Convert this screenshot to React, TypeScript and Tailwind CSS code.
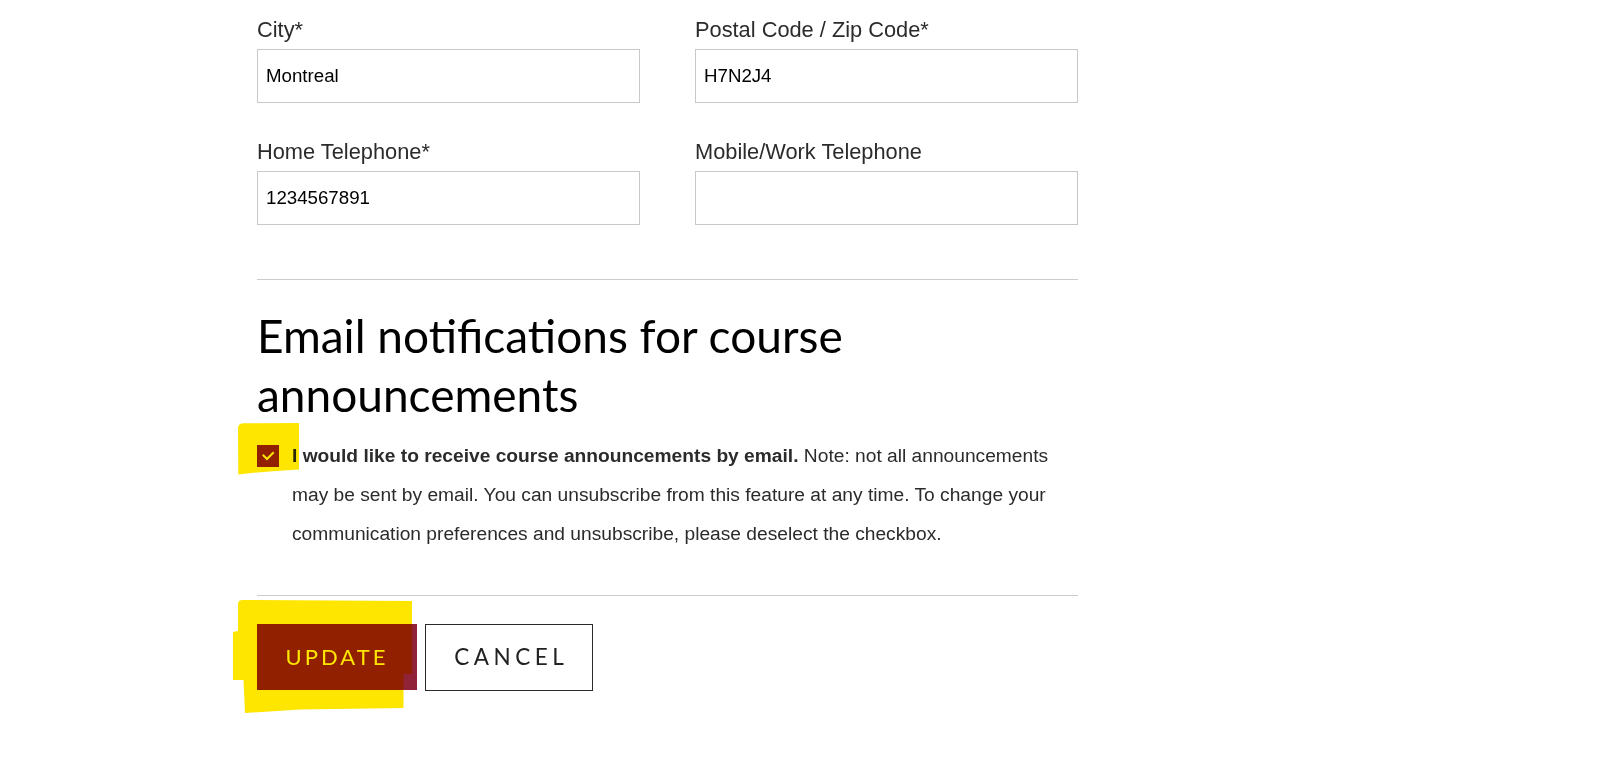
import React from "react";

function Field({ label, value }: { label: string; value: string }) {
  return (
    <div className="flex flex-col">
      <label className="mb-[6px] text-[21.8px] leading-[26px] text-[#2b2b2b] [font-family:'Liberation_Sans',Arial,sans-serif]">
        {label}
      </label>
      <input
        readOnly
        value={value}
        className="h-[54px] w-full border border-[#c8c8c8] bg-white px-[8px] text-[18.7px] text-black outline-none [font-family:'Liberation_Sans',Arial,sans-serif]"
      />
    </div>
  );
}

export default function App() {
  return (
    <div className="relative min-h-[782px] w-full overflow-hidden bg-white">
      <div className="pl-[257px] pt-[17px]">
        <div className="w-[821px]">
          <div className="grid grid-cols-2 gap-x-[55px] gap-y-[36px]">
            <Field label="City*" value="Montreal" />
            <Field label="Postal Code / Zip Code*" value="H7N2J4" />
            <Field label="Home Telephone*" value="1234567891" />
            <Field label="Mobile/Work Telephone" value="" />
          </div>

          <hr className="mt-[54px] border-0 border-t border-[#cccccc]" />

          <h2 className="mt-[26px] text-[46px] font-normal leading-[59.4px] text-black [font-family:Lato,'Open_Sans',sans-serif]">
            Email notifications for course announcements
          </h2>

          <div className="mt-[11px] flex items-start">
            <div className="mt-[9.5px] flex h-[22px] w-[22px] shrink-0 items-center justify-center bg-[#912338]">
              <svg width="22" height="22" viewBox="0 0 22 22">
                <path d="M6.5 10.5 L10 14 L16 8" fill="none" stroke="#ffffff" strokeWidth="2" strokeLinecap="square" />
              </svg>
            </div>
            <p className="ml-[13px] text-[19.2px] leading-[39px] text-[#2b2b2b] [font-family:'Liberation_Sans',Arial,sans-serif]">
              <b className="font-bold">I would like to receive course announcements by email.</b>{" "}
              Note: not all announcements may be sent by email. You can unsubscribe from this feature at any time. To change your communication preferences and unsubscribe, please deselect the checkbox.
            </p>
          </div>

          <hr className="mt-[42px] border-0 border-t border-[#cccccc]" />

          <div className="mt-[28px] flex gap-[8px]">
            <button className="flex h-[66px] w-[160px] items-center justify-center bg-[#912338] text-[22px] tracking-[0.14em] text-white [font-family:Lato,'Open_Sans',sans-serif]">
              UPDATE
            </button>
            <button className="flex h-[67px] w-[168px] items-center justify-center border border-[#2b2b2b] bg-white text-[22.5px] tracking-[0.2em] text-[#222] [font-family:Lato,'Open_Sans',sans-serif]">
              <span className="ml-[0.2em]">CANCEL</span>
            </button>
          </div>
        </div>
      </div>

      <svg
        className="pointer-events-none absolute left-0 top-0 mix-blend-multiply"
        width="1608"
        height="782"
        viewBox="0 0 1608 782"
      >
        <path
          d="M238 428 Q238 423.3 244 423.3 L299 423 L299 469.5 Q268 471 238.3 474.5 Z"
          fill="#ffe600"
        />
        <path
          d="M238 604 Q238 600 243 600 L412 601 L412 674 L403.5 674 L403.5 708 L300 709.5 L245 713 L243.5 680 L233 680 L233 632 L238 631 Z"
          fill="#ffe600"
        />
      </svg>
    </div>
  );
}
